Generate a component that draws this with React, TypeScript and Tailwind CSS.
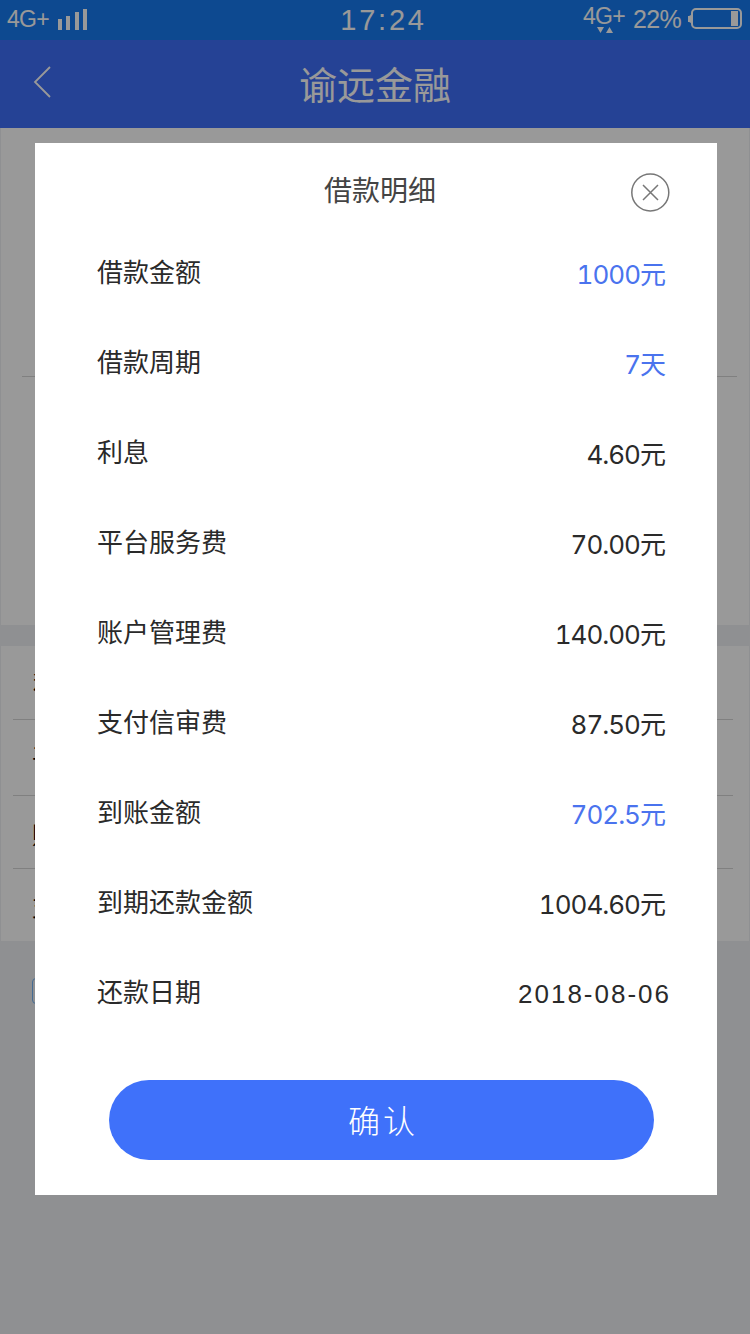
import React from 'react';

interface DetailRow {
  label: string;
  value: string;
  unit: string;
  highlight?: boolean;
}

const details: DetailRow[] = [
  { label: '借款金额', value: '1000', unit: '元', highlight: true },
  { label: '借款周期', value: '7', unit: '天', highlight: true },
  { label: '利息', value: '4.60', unit: '元' },
  { label: '平台服务费', value: '70.00', unit: '元' },
  { label: '账户管理费', value: '140.00', unit: '元' },
  { label: '支付信审费', value: '87.50', unit: '元' },
  { label: '到账金额', value: '702.5', unit: '元', highlight: true },
  { label: '到期还款金额', value: '1004.60', unit: '元' },
];

const StatusBar: React.FC = () => (
  <div className="flex h-10 items-start justify-between bg-[#167bf0] text-white font-['Liberation_Sans','Noto_Sans_CJK_SC',sans-serif]">
    <div className="flex w-[200px] pl-[7px] pt-[7px]">
      <span className="w-[51px] text-[23px] leading-6 tracking-[-0.7px]">4G+</span>
      <svg width="30" height="22" viewBox="0 0 30 22" fill="currentColor" className="mt-[2px]">
        <rect x="0" y="10" width="4" height="11" />
        <rect x="8" y="7" width="4" height="14" />
        <rect x="17" y="3" width="4" height="18" />
        <rect x="25" y="0" width="4" height="21" />
      </svg>
    </div>
    <span className="pr-px pt-[5px] text-[29px] leading-[30px] tracking-[2.8px]">17:24</span>
    <div className="flex w-[182px] pl-[15px]">
      <div className="w-[50px] pt-1">
        <div className="text-[23px] leading-6 tracking-[-0.7px]">4G+</div>
        <svg width="16" height="6" viewBox="0 0 16 6" fill="currentColor" className="-mt-[1px] ml-[14px]">
          <path d="M0 0h7L3.500 6z" />
          <path d="M12.500 0l3.500 6H9z" />
        </svg>
      </div>
      <span className="w-[55px] pt-[6px] text-[25px] leading-[26px] tracking-[-0.7px]">22%</span>
      <svg width="56" height="22" viewBox="0 0 56 22" fill="none" className="mt-2">
        <path d="M5 5.500C3 5.500 3.500 8 0 8v6c3.500 0 3 2.500 5 2.500z" fill="currentColor" />
        <rect x="4" y="1" width="49" height="19" rx="4" stroke="currentColor" strokeWidth="2" />
        <rect x="43" y="3" width="7" height="15" fill="currentColor" />
      </svg>
    </div>
  </div>
);

// Loan page that stays visible, dimmed, behind the dialog
const LoanPage: React.FC = () => (
  <div className="h-[1334px] bg-[#eef0f3]">
    <StatusBar />
    <header className="flex h-[88px] items-center bg-[#3e6ef8] text-white">
      <svg width="20" height="32" viewBox="0 0 20 32" fill="none" stroke="currentColor" strokeWidth="1.800" className="ml-8 -mt-1">
        <path d="M18 1L3 16l15 15" />
      </svg>
      <h1 className="flex-1 pb-[3px] pr-[52px] text-center text-[38px] leading-[40px]">谕远金融</h1>
    </header>
    <section className="mx-px h-[497px] bg-white">
      <div className="ml-[21px] mr-[12px] h-[249px] border-b border-[#d5d5d5]" />
    </section>
    <section className="mx-px mt-[21px] bg-white pl-3 pr-4 text-[24px] text-black">
      <div className="flex h-[74px] items-center border-b border-[#d5d5d5] pb-px pl-5">利息</div>
      <div className="flex h-[76px] items-center border-b border-[#d5d5d5] pb-1 pl-[19px]">平台服务费</div>
      <div className="flex h-[73px] items-center border-b border-[#d5d5d5] pl-[19px] pt-1">账户管理费</div>
      <div className="flex h-[72px] items-center pl-[19px] pt-px">支付信审费</div>
    </section>
    <div className="ml-8 mt-[37px] size-[26px] rounded-[4px] border border-[#73b4f5]" />
  </div>
);

const DetailDialog: React.FC = () => (
  <div className="flex h-[1052px] w-[682px] flex-col bg-white">
    <div className="flex h-[83px] pl-[289px] pt-[30px]">
      <h2 className="-mt-[2px] w-[307px] text-[28px] leading-[36px] text-[#444]">借款明细</h2>
      <svg width="40" height="40" viewBox="0 0 40 40" fill="none" stroke="#777" strokeWidth="1.500">
        <circle cx="19.300" cy="19.500" r="18.500" />
        <path d="M12 12l15 15M27 12L12 27" />
      </svg>
    </div>
    <div className="pl-[62px] pr-[51px]">
      {details.map((row) => (
        <div key={row.label} className="flex h-[90px] items-center justify-between text-[26px] leading-[36px] text-[#2a2a2a]">
          <span>{row.label}</span>
          <span className={row.highlight ? 'pt-[5px] text-[#4a73ee]' : 'pt-[5px]'}>
            <span className="font-['Inter','Noto_Sans_CJK_SC',sans-serif] tabular-nums tracking-[-1px]">{row.value}</span>
            {row.unit}
          </span>
        </div>
      ))}
      <div className="-mr-[5px] flex h-[90px] items-center justify-between text-[26px] leading-[36px] text-[#2a2a2a]">
        <span>还款日期</span>
        <span className="pt-[6px] tracking-[2px] font-['Liberation_Sans','Noto_Sans_CJK_SC',sans-serif]">2018-08-06</span>
      </div>
    </div>
    <button className="ml-[74px] mt-[44px] h-20 w-[545px] rounded-full bg-[#3f71fa] pb-[2px] pl-[3px] text-[32px] font-light tracking-[3px] text-white">
      确认
    </button>
  </div>
);

export default function App() {
  return (
    <div className="relative h-[1334px] w-[750px] overflow-hidden font-['Noto_Sans_CJK_SC',sans-serif]">
      <LoanPage />
      <div className="absolute inset-0 bg-black/40 pl-[35px] pt-[143px]">
        <DetailDialog />
      </div>
    </div>
  );
}
